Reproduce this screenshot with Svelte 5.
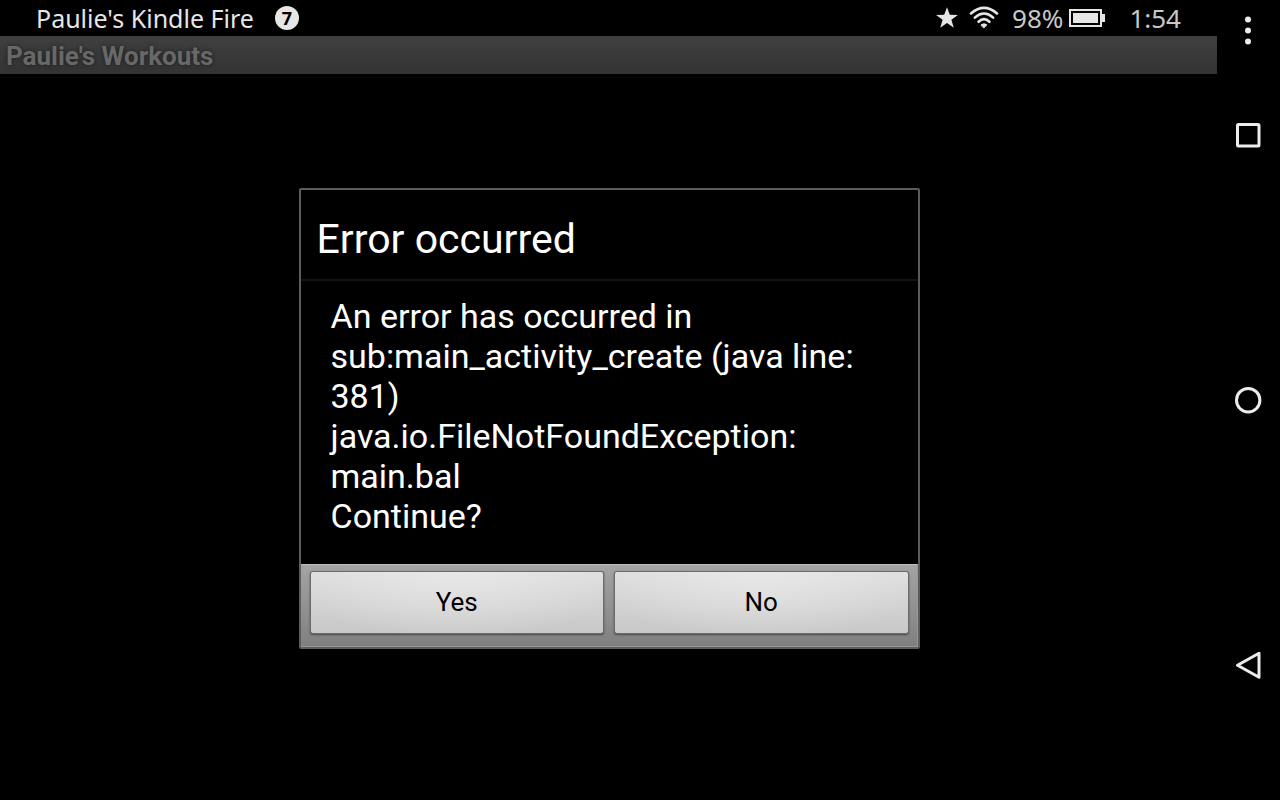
<script lang="ts">
	let open = $state(true);

	const title = 'Error occurred';
	const lines = [
		'An error has occurred in sub:main_activity_create (java line: 381)',
		'java.io.FileNotFoundException: main.bal',
		'Continue?'
	];

	function close() {
		open = false;
	}
</script>

<div class="device">
	<div class="screen">
		<header class="status">
			<div class="status-left">
				<span>Paulie's Kindle Fire</span>
				<span class="count">7</span>
			</div>
			<div class="status-right">
				<svg class="star" width="24" height="24" viewBox="0 0 24 24" aria-hidden="true">
					<path d="M12 1.2l2.8 7.6 8.1.2-6.5 4.8 2.4 8-6.8-4.7-6.8 4.7 2.4-8L1.1 9l8.1-.2z" />
				</svg>
				<svg class="wifi" width="30" height="24" viewBox="0 0 30 24" aria-hidden="true">
					<path d="M2 7.4Q15-3.6 28 7.4" />
					<path d="M5.8 11.6Q15 3.4 24.2 11.6" />
					<path d="M9.6 15.8Q15 10.6 20.4 15.8" />
					<path class="dot" d="M12.2 18.8Q15 16.6 17.8 18.8L15 21.8z" />
				</svg>
				<span class="percent">98%</span>
				<svg class="battery" width="36" height="18" viewBox="0 0 36 18" aria-hidden="true">
					<rect class="case" x="1" y="1" width="31" height="16" />
					<rect x="4" y="4" width="25" height="10" />
					<rect x="33" y="5" width="3" height="8" />
				</svg>
				<span class="clock">1:54</span>
			</div>
		</header>

		<main class="window">
			<h1 class="app-title">Paulie's Workouts</h1>

			{#if open}
				<div class="overlay">
					<div class="dialog" role="alertdialog" aria-labelledby="dialog-title">
						<h2 id="dialog-title">{title}</h2>
						<div class="message">
							{#each lines as line}
								<p>{line}</p>
							{/each}
						</div>
						<div class="actions">
							<button class="action" onclick={close}>Yes</button>
							<button class="action" onclick={close}>No</button>
						</div>
					</div>
				</div>
			{/if}
		</main>
	</div>

	<nav class="nav">
		<button class="nav-btn menu" aria-label="Menu">
			<svg width="28" height="32" viewBox="0 0 28 32">
				<circle class="fill" cx="14" cy="5.5" r="3" />
				<circle class="fill" cx="14" cy="16.5" r="3" />
				<circle class="fill" cx="14" cy="27.5" r="3" />
			</svg>
		</button>
		<button class="nav-btn" aria-label="Recent apps">
			<svg width="28" height="28" viewBox="0 0 28 28">
				<rect x="3.5" y="3.5" width="21.5" height="21.5" rx="1" />
			</svg>
		</button>
		<button class="nav-btn home" aria-label="Home">
			<svg width="28" height="28" viewBox="0 0 28 28">
				<circle cx="14.2" cy="14.2" r="11.7" />
			</svg>
		</button>
		<button class="nav-btn" aria-label="Back">
			<svg width="28" height="28" viewBox="0 0 28 28">
				<path d="M25 2.2V26.2L3.5 14.2z" />
			</svg>
		</button>
	</nav>
</div>

<style>
	:global(body) {
		background: #000;
	}

	.device {
		display: grid;
		grid-template-columns: minmax(0, 1fr) 63px;
		min-height: 100vh;
		background: #000;
		font-family: Roboto, sans-serif;
	}

	.screen {
		display: flex;
		flex-direction: column;
	}

	.status {
		display: flex;
		align-items: center;
		justify-content: space-between;
		height: 36px;
		padding: 0 36px;
		color: #e6e6e6;
		font-family: 'Noto Sans', sans-serif;
		font-size: 25px;
		line-height: 34px;
	}

	.status-left,
	.status-right {
		display: flex;
		align-items: center;
	}

	.status-left {
		gap: 21px;
	}

	.count {
		width: 24px;
		height: 24px;
		border-radius: 50%;
		background: #e6e6e6;
		color: #000;
		font-size: 18px;
		font-weight: 700;
		line-height: 24px;
		text-align: center;
	}

	.status-right {
		color: #c8c8c8;
		font-size: 26px;
	}

	.status-right svg {
		fill: #e6e6e6;
	}

	.wifi {
		margin: 0 13px 0 10px;
	}

	.status-right .wifi {
		fill: none;
		stroke: #e6e6e6;
		stroke-width: 2.6;
		stroke-linecap: round;
	}

	.wifi .dot {
		fill: #e6e6e6;
		stroke-width: 1;
	}

	.battery {
		margin: 0 24px 0 6px;
	}

	.battery .case {
		fill: none;
		stroke: #e6e6e6;
		stroke-width: 2;
	}

	.window {
		position: relative;
		flex: 1;
	}

	.app-title {
		margin: 0;
		padding: 0 6px;
		height: 38px;
		background: linear-gradient(#404040, #333);
		color: #686868;
		font-size: 26px;
		font-weight: 700;
		line-height: 40px;
		text-shadow: 0 0 4px #1c1c1c;
	}

	.overlay {
		position: absolute;
		inset: 0;
		display: flex;
		align-items: center;
		justify-content: center;
		padding: 0 0 0 1px;
	}

	.dialog {
		box-sizing: border-box;
		width: 51%;
		min-width: 621px;
		border: 2px solid #5c5c5c;
		border-radius: 2px;
		background: #000;
		color: #fff;
	}

	.dialog h2 {
		margin: 0;
		padding: 25px 16px 15px;
		border-bottom: 2px solid #141414;
		font-size: 41px;
		font-weight: 400;
		line-height: 49px;
	}

	.message {
		padding: 15px 30px 28px;
		font-size: 34px;
		line-height: 40px;
	}

	.message p {
		margin: 0;
	}

	.actions {
		display: grid;
		grid-template-columns: 1fr 1fr;
		gap: 12px;
		padding: 7px 9px 13px 10px;
		border: 1px solid #989898;
		border-width: 1px 1px 1px 0;
		border-top-color: #bcbcbc;
		background: linear-gradient(#a4a4a4, #808080);
	}

	.action {
		height: 61px;
		padding: 0;
		border: none;
		border-radius: 2px;
		background: radial-gradient(ellipse at 50% 0, rgba(236, 236, 236, 0.7), rgba(232, 232, 232, 0) 80%),
			linear-gradient(#dedede, #c8c8c8);
		box-shadow: 0 0 0 1px #6c6c6c, 0 1px 2px 1px #484848;
		color: #000;
		font-family: inherit;
		font-size: 26px;
		cursor: pointer;
	}

	.action:active {
		background: #b4b4b4;
	}

	.nav {
		display: flex;
		flex-direction: column;
		padding: 0 2px 60px 0;
	}

	.nav-btn {
		display: flex;
		align-items: center;
		justify-content: center;
		height: 150px;
		padding: 0;
		border: none;
		background: none;
		cursor: pointer;
	}

	.nav-btn.menu {
		height: 60px;
	}

	.nav-btn.home {
		flex: 1;
	}

	.nav-btn svg {
		fill: none;
		stroke: #ececec;
		stroke-width: 3;
		stroke-linejoin: round;
	}

	.nav-btn .fill {
		fill: #ececec;
		stroke: none;
	}
</style>
